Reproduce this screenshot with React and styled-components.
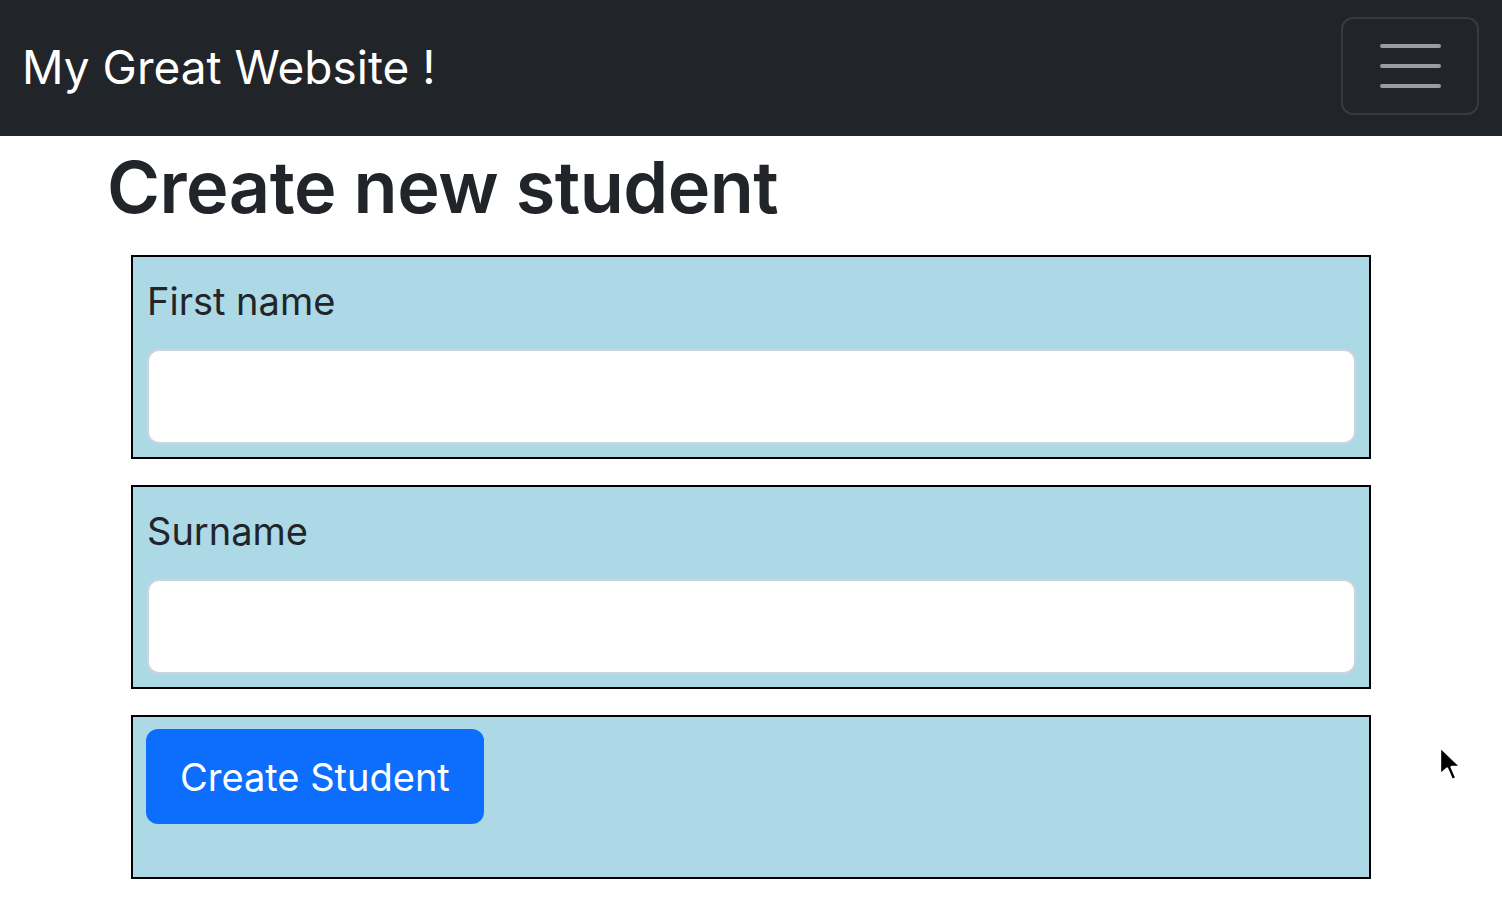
import React from "react";
import styled, { createGlobalStyle } from "styled-components";

const GlobalStyle = createGlobalStyle`
  * { box-sizing: border-box; }
  body {
    margin: 0;
    font-family: Inter, "Liberation Sans", Arial, sans-serif;
    color: #212529;
    background: #fff;
  }
`;

const Navbar = styled.nav`
  display: flex;
  align-items: center;
  justify-content: space-between;
  height: 136px;
  padding: 0 23px 0 22px;
  background-color: #212529;
`;

const Brand = styled.a`
  color: #fff;
  font-size: 46px;
  line-height: 1.5;
  text-decoration: none;
  margin-top: -2px;
`;

const Toggler = styled.button`
  display: flex;
  flex-direction: column;
  align-items: center;
  justify-content: center;
  gap: 16px;
  width: 138px;
  height: 98px;
  margin-top: -4px;
  background: transparent;
  border: 2px solid rgba(255, 255, 255, 0.1);
  border-radius: 12px;

  span {
    display: block;
    width: 61px;
    height: 4px;
    border-radius: 2px;
    background: rgba(255, 255, 255, 0.55);
  }
`;

const Container = styled.main`
  width: 1288px;
  margin: 0 auto;
`;

const Title = styled.h1`
  margin: 0 0 25px;
  padding-top: 8px;
  font-size: 72px;
  font-weight: 600;
  line-height: 86px;
  letter-spacing: -0.5px;
`;

const Box = styled.div`
  margin: 0 24px 26px;
  padding: ${(p) => p.$pad || "14px 13px 13px 14px"};
  min-height: ${(p) => p.$minH || "auto"};
  border: 2px solid #000;
  background-color: lightblue;
`;

const Label = styled.label`
  display: block;
  margin-bottom: 18px;
  font-size: 38px;
  line-height: 60px;
`;

const Input = styled.input`
  display: block;
  width: 100%;
  height: 95px;
  padding: 12px 24px;
  font-size: 32px;
  border: 2px solid #ced4da;
  border-radius: 12px;
  background: #fff;
  outline: none;
`;

const Button = styled.button`
  height: 95px;
  margin-left: -1px;
  padding: 0 34px;
  font-family: inherit;
  font-size: 38px;
  color: #fff;
  background-color: #0d6efd;
  border: none;
  border-radius: 12px;
`;

const Cursor = styled.svg`
  position: absolute;
  left: 1438px;
  top: 745px;
`;

export default function App() {
  return (
    <>
      <GlobalStyle />
      <Navbar>
        <Brand href="#">My Great Website !</Brand>
        <Toggler aria-label="Toggle navigation">
          <span />
          <span />
          <span />
        </Toggler>
      </Navbar>
      <Container>
        <Title>Create new student</Title>
        <Box>
          <Label htmlFor="firstName">First name</Label>
          <Input id="firstName" type="text" />
        </Box>
        <Box>
          <Label htmlFor="surname">Surname</Label>
          <Input id="surname" type="text" />
        </Box>
        <Box $pad="12px 14px" $minH="164px">
          <Button type="submit">Create Student</Button>
        </Box>
      </Container>
      <Cursor width="26" height="40" viewBox="0 0 13 20">
        <path d="M1 1 L1 15 L4.5 11.8 L7 17.5 L9.2 16.5 L6.8 11 L11.5 11 Z" fill="#000" stroke="#fff" strokeWidth="1.2" strokeLinejoin="round" />
      </Cursor>
    </>
  );
}
